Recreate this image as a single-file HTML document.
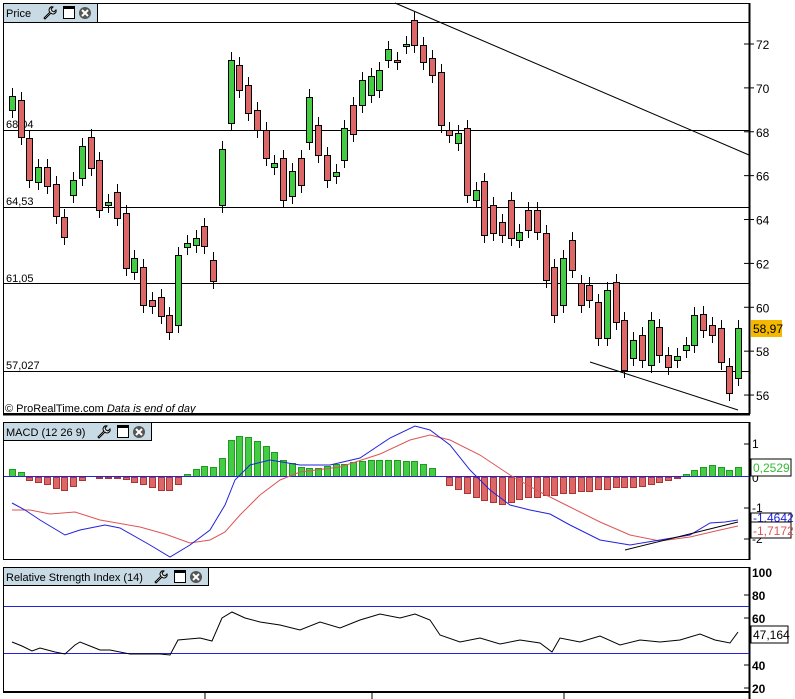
<!DOCTYPE html><html><head><meta charset="utf-8"><style>
body{margin:0;background:#fff;width:795px;height:699px;overflow:hidden;font-family:"Liberation Sans",sans-serif}
svg{display:block}
text{font-family:"Liberation Sans",sans-serif}
</style></head><body>
<svg id="s" width="795" height="699" xmlns="http://www.w3.org/2000/svg" font-size="12">
<rect width="795" height="699" fill="#fff"/>
<rect x="3.5" y="3.5" width="746" height="410" fill="none" stroke="#000"/>
<line x1="3" y1="414.5" x2="750" y2="414.5" stroke="#000" stroke-width="2"/>
<g stroke="#000" stroke-width="1">
<line x1="4" y1="22.5" x2="749" y2="22.5"/>
<line x1="4" y1="130.5" x2="749" y2="130.5"/>
<line x1="4" y1="207.5" x2="749" y2="207.5"/>
<line x1="4" y1="283.5" x2="749" y2="283.5"/>
<line x1="4" y1="371.5" x2="749" y2="371.5"/>
<line x1="395" y1="3" x2="749" y2="155"/>
<line x1="590" y1="362" x2="738" y2="410"/>
</g>
<g font-size="11"><text x="6" y="128">68,04</text><text x="6" y="205">64,53</text><text x="6" y="282">61,05</text><text x="6" y="369">57,027</text></g>
<g id="candles"></g>
<text x="5" y="412" font-size="11">© ProRealTime.com  <tspan font-style="italic">Data is end of day</tspan></text>
<line x1="749.5" y1="3" x2="749.5" y2="414" stroke="#000" stroke-width="2"/>
<g id="pax"></g>
<rect x="751" y="320" width="31" height="17" fill="#f5b800"/>
<text x="753" y="333" font-size="12">58,97</text>
<rect x="3.5" y="3.5" width="94" height="19" fill="#c8dae4" stroke="#000"/>
<text x="6" y="17" font-size="11">Price</text>
<g id="t1"></g>
<rect x="3.5" y="422.5" width="746" height="137" fill="none" stroke="#000"/>
<line x1="749.5" y1="422" x2="749.5" y2="560" stroke="#000" stroke-width="2"/>
<g id="hist"></g>
<line x1="4" y1="476.5" x2="749" y2="476.5" stroke="#2222dd"/>
<polyline fill="none" stroke="#dd5555" points="12,510 30,510 50,514 75,512 100,520 140,527 165,534 190,543 210,540 225,532 240,515 260,495 280,480 300,472 340,467 380,454 410,440 430,435 450,440 480,455 510,475 540,492 570,507 600,522 630,535 660,541 690,537 720,530 738,526"/>
<polyline fill="none" stroke="#2222dd" points="12,503 25,510 40,520 65,535 80,530 95,527 105,525 120,528 150,545 170,557 190,545 210,530 225,505 235,480 250,465 270,460 300,465 330,465 360,458 390,438 415,426 430,430 450,445 470,470 490,490 510,505 530,510 550,514 570,525 600,540 630,545 660,540 690,535 710,523 725,522 738,520"/>
<line x1="625" y1="550" x2="738" y2="522" stroke="#000"/>
<g font-size="12"><text x="752" y="448">1</text><text x="752" y="482">0</text><text x="752" y="512">-1</text><text x="752" y="543">-2</text></g>
<g stroke="#000"><line x1="744" y1="444" x2="749" y2="444"/><line x1="744" y1="508" x2="749" y2="508"/><line x1="744" y1="539" x2="749" y2="539"/></g>
<rect x="751" y="459" width="40" height="17" fill="#fff" stroke="#000"/>
<text x="753" y="472" fill="#33bb33">0,2529</text>
<rect x="751" y="513" width="40" height="10" fill="#fff" stroke="#000"/>
<text x="753" y="522" fill="#2222dd">-1,4642</text>
<rect x="751" y="522" width="40" height="16" fill="#fff" stroke="#000"/>
<text x="753" y="535" fill="#dd5555">-1,7172</text>
<rect x="3.5" y="422.5" width="148" height="18" fill="#c8dae4" stroke="#000"/>
<text x="6" y="436" font-size="11">MACD (12 26 9)</text>
<g id="t2"></g>
<rect x="3.5" y="567.5" width="746" height="124" fill="none" stroke="#000"/>
<line x1="3" y1="692" x2="750" y2="692" stroke="#000" stroke-width="2"/>
<line x1="749.5" y1="567" x2="749.5" y2="699" stroke="#000" stroke-width="2"/>
<line x1="4" y1="606.5" x2="749" y2="606.5" stroke="#2222dd"/>
<line x1="4" y1="653.5" x2="749" y2="653.5" stroke="#2222dd"/>
<polyline fill="none" stroke="#000" points="12,642 22,646 32,651 40,648 55,652 65,654 75,645 80,642 90,646 100,650 110,650 130,654 145,654 160,654 170,655 178,640 200,638 212,641 222,618 232,612 245,618 260,622 280,625 300,630 320,622 340,628 360,620 380,614 400,618 415,614 430,620 440,635 460,642 480,638 500,644 520,640 540,643 552,652 560,638 580,642 600,636 620,645 640,640 660,642 680,640 700,634 715,640 730,643 738,632"/>
<g font-size="12" font-weight="bold"><text x="752" y="577">100</text><text x="752" y="600">80</text><text x="752" y="623">60</text><text x="752" y="670">40</text><text x="752" y="693">20</text></g>
<g stroke="#000"><line x1="744" y1="595" x2="749" y2="595"/><line x1="744" y1="618" x2="749" y2="618"/><line x1="744" y1="665" x2="749" y2="665"/><line x1="744" y1="688" x2="749" y2="688"/></g>
<rect x="751" y="626" width="37" height="17" fill="#fff" stroke="#000"/>
<text x="753" y="639">47,164</text>
<rect x="3.5" y="567.5" width="205" height="18" fill="#c8dae4" stroke="#000"/>
<text x="6" y="581" font-size="11">Relative Strength Index (14)</text>
<g id="t3"></g>
<g stroke="#000"><line x1="205" y1="692" x2="205" y2="699"/><line x1="372" y1="692" x2="372" y2="699"/><line x1="564" y1="692" x2="564" y2="699"/></g>
</svg>
<script>
var NS="http://www.w3.org/2000/svg";
function el(p,t,a){var e=document.createElementNS(NS,t);for(var k in a)e.setAttribute(k,a[k]);p.appendChild(e);return e;}
var C=[[1,96,110],[0,100,137],[0,138,180],[1,167,182],[0,167,186],[0,184,216],[0,217,237],[1,180,195],[1,146,178],[0,137,168],[0,160,210],[1,202,205],[0,192,218],[0,213,268],[1,258,272],[0,267,305],[0,300,306],[0,297,316],[0,315,332],[1,255,325],[1,243,247],[1,238,245],[0,226,246],[0,260,281],[1,149,205],[1,60,123],[0,65,90],[0,85,113],[0,110,130],[0,130,158],[1,163,167],[0,158,200],[1,171,196],[0,158,185],[1,97,142],[0,125,155],[0,155,180],[1,172,176],[1,128,160],[0,105,134],[1,80,105],[1,76,95],[1,70,90],[1,49,60],[0,60,62],[1,44,46],[0,20,45],[0,45,62],[0,58,75],[0,72,125],[0,130,135],[1,133,143],[0,128,195],[1,190,200],[0,181,235],[0,205,233],[0,222,235],[0,200,238],[1,232,240],[0,210,230],[0,210,232],[0,233,280],[0,267,315],[1,258,305],[0,240,270],[0,283,305],[0,285,300],[0,302,338],[1,290,338],[0,282,322],[0,320,370],[1,340,358],[0,335,360],[1,320,365],[0,327,355],[0,355,367],[1,356,360],[1,345,350],[1,315,345],[0,314,330],[0,325,335],[0,328,362],[0,366,393],[1,328,378]];
var H=[7,4,-3,-5,-7,-11,-13,-9,-3,0,-1,-1,-1,-2,-5,-7,-10,-13,-13,-7,2,7,10,9,18,36,40,39,35,30,24,16,13,9,8,8,10,12,12,14,15,16,16,16,16,15,15,12,8,0,-8,-12,-16,-20,-23,-25,-27,-25,-22,-20,-20,-18,-18,-16,-16,-14,-14,-12,-12,-10,-10,-10,-9,-7,-5,-3,-1,2,6,9,11,9,6,9];
var g=document.getElementById("candles"),h=document.getElementById("hist");
var n=C.length;
for(var i=0;i<n;i++){var x=Math.round(12+i*(738-12)/(n-1));var c=C[i];
el(g,"line",{x1:x+.5,x2:x+.5,y1:c[1]-8,y2:c[2]+8,stroke:"#000"});
el(g,"rect",{x:x-3+.5,y:c[1]+.5,width:6,height:Math.max(1,c[2]-c[1]),fill:c[0]?"#44cc44":"#dd6666",stroke:"#000"});
var v=H[i];if(v){el(h,"rect",{x:x-3+.5,y:(v>0?476-v:477)+.5,width:6,height:Math.abs(v),fill:v>0?"#44cc44":"#dd6666",stroke:v>0?"#229922":"#aa3333"});}}
var pa=document.getElementById("pax");
for(var p=56;p<=72;p+=2){var y=44+(72-p)*21.94;el(pa,"line",{x1:744,x2:754,y1:y,y2:y,stroke:"#000"});var t=el(pa,"text",{x:756,y:y+5,"font-size":"12"});t.textContent=p;}
function tab(id,x,y){var t=document.getElementById(id);
el(t,"path",{d:"M"+(x+2)+" "+(y+14)+" l6 -6 a3 3 0 0 1 3 -5 l-2 2 1 2 2 1 2 -2 a3 3 0 0 1 -5 3 l-6 6z",fill:"#fff",stroke:"#000"});
el(t,"rect",{x:x+21.5,y:y+2.5,width:11,height:12,fill:"#fff",stroke:"#000"});
el(t,"rect",{x:x+22,y:y+3,width:10,height:2,fill:"#000"});
el(t,"circle",{cx:x+43,cy:y+9,r:6,fill:"#555"});
el(t,"path",{d:"M"+(x+40)+" "+(y+6)+" l6 6 M"+(x+46)+" "+(y+6)+" l-6 6",stroke:"#fff","stroke-width":2});}
tab("t1",42,4);tab("t2",96,423);tab("t3",153,568);
</script>
</body></html>
